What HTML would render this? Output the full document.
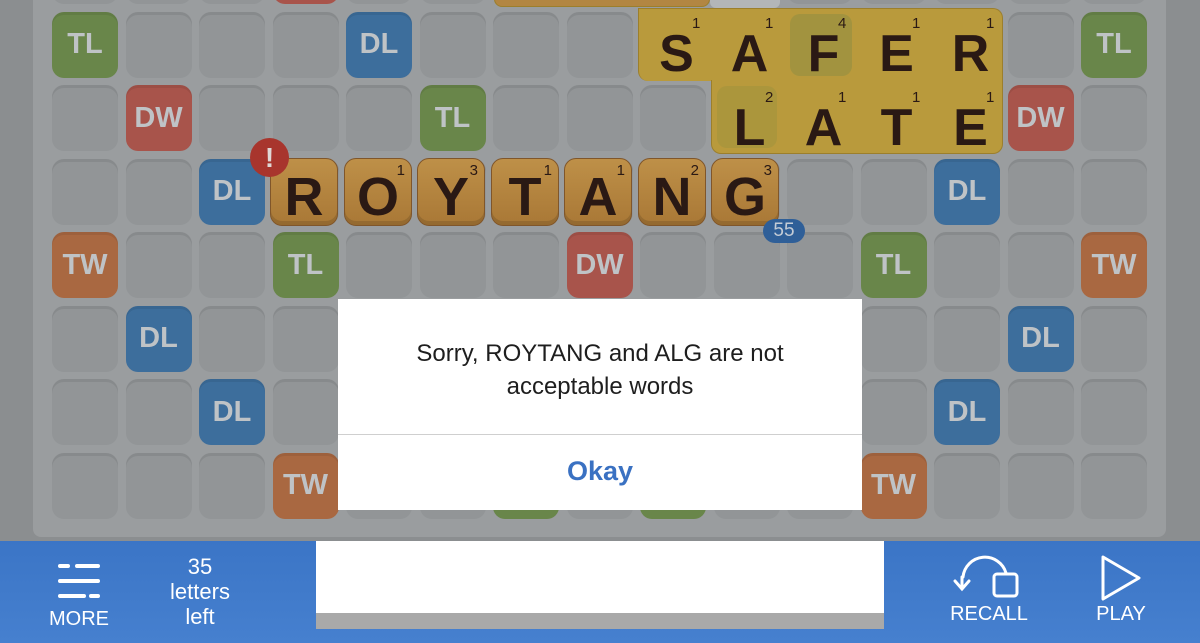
<!DOCTYPE html>
<html><head><meta charset="utf-8"><style>
*{margin:0;padding:0;box-sizing:border-box}
body{width:1200px;height:643px;overflow:hidden;background:#8b8e90;position:relative;font-family:"Liberation Sans",sans-serif}
.board{position:absolute;left:33px;top:-20px;width:1133px;height:557px;background:#9a9d9f;border-radius:0 0 8px 8px}
.grid{position:absolute;left:52px;top:-62px;display:grid;grid-template-columns:repeat(15,66px);grid-auto-rows:66px;column-gap:7.5px;row-gap:7.5px}
.grid div{border-radius:12px;background:#929597;box-shadow:inset 0 3px 0 rgba(0,0,0,.07);color:#bfc3c6;font-size:29px;font-weight:bold;display:flex;align-items:center;justify-content:center}
.grid .tl{background:#69864a}.grid .dl{background:#3d6e9c}.grid .dw{background:#a8544b}.grid .tw{background:#a96841}
.gold{position:absolute;background:#b99a3c;border:1px solid #9c7f2c}
.t{position:absolute;width:68px;height:68px;border-radius:12px;background:linear-gradient(#be9048,#a97836);border:1px solid #80562a;box-shadow:inset 0 -4px 0 rgba(0,0,0,.12);color:#2a1914;font-weight:bold;font-size:54px;text-align:center;line-height:76px}
.L{position:absolute;width:73px;text-align:center;color:#2a1914;font-weight:bold;font-size:52px}
.n{position:absolute;font-size:15px;color:#2a1914;font-weight:normal;line-height:1}
.t .n{right:6px;top:4px}
.bar{position:absolute;left:0;top:541px;width:1200px;height:102px;background:linear-gradient(#3b75c6,#4680cf);color:#fff}
.dlg{position:absolute;left:338px;top:299px;width:524px;height:211px;background:#fff}
</style></head><body>
<div class="board"></div>
<div class="grid">
<div></div><div></div><div></div><div class="dw"></div><div></div><div></div><div></div><div></div><div></div><div></div><div></div><div></div><div></div><div></div><div></div>
<div class="tl">TL</div><div></div><div></div><div></div><div class="dl">DL</div><div></div><div></div><div></div><div></div><div></div><div></div><div></div><div></div><div></div><div class="tl">TL</div>
<div></div><div class="dw">DW</div><div></div><div></div><div></div><div class="tl">TL</div><div></div><div></div><div></div><div></div><div></div><div></div><div></div><div class="dw">DW</div><div></div>
<div></div><div></div><div class="dl">DL</div><div></div><div></div><div></div><div></div><div></div><div></div><div></div><div></div><div></div><div class="dl">DL</div><div></div><div></div>
<div class="tw">TW</div><div></div><div></div><div class="tl">TL</div><div></div><div></div><div></div><div class="dw">DW</div><div></div><div></div><div></div><div class="tl">TL</div><div></div><div></div><div class="tw">TW</div>
<div></div><div class="dl">DL</div><div></div><div></div><div></div><div></div><div></div><div></div><div></div><div></div><div></div><div></div><div></div><div class="dl">DL</div><div></div>
<div></div><div></div><div class="dl">DL</div><div></div><div></div><div></div><div></div><div></div><div></div><div></div><div></div><div></div><div class="dl">DL</div><div></div><div></div>
<div></div><div></div><div></div><div class="tw">TW</div><div></div><div></div><div class="tl">TL</div><div></div><div class="tl">TL</div><div></div><div></div><div class="tw">TW</div><div></div><div></div><div></div>
</div>
<div class="gold" style="left:494px;top:-10px;width:216px;height:17px;border-radius:0 0 8px 8px;background:#b28642"></div>
<div style="position:absolute;left:710px;top:-5px;width:70px;height:13px;background:#b3b6b8;border-radius:0 0 6px 6px"></div>
<div class="gold" style="left:638px;top:8px;width:365px;height:73px;border-radius:0 10px 0 10px;border-bottom:none"></div>
<div class="gold" style="left:711px;top:80px;width:292px;height:74px;border-radius:0 0 10px 10px;border-top:none"></div>
<div style="position:absolute;left:790px;top:14px;width:62px;height:62px;border-radius:10px;background:#a2933f"></div>
<div style="position:absolute;left:717px;top:86px;width:60px;height:62px;border-radius:10px;background:#ab963c"></div>
<div class="L" style="left:640px;top:24px">S</div><div class="n" style="left:692px;top:16px">1</div>
<div class="L" style="left:713px;top:24px">A</div><div class="n" style="left:765px;top:16px">1</div>
<div class="L" style="left:787px;top:24px">F</div><div class="n" style="left:838px;top:16px">4</div>
<div class="L" style="left:860px;top:24px">E</div><div class="n" style="left:912px;top:16px">1</div>
<div class="L" style="left:934px;top:24px">R</div><div class="n" style="left:986px;top:16px">1</div>
<div class="L" style="left:713px;top:98px">L</div><div class="n" style="left:765px;top:90px">2</div>
<div class="L" style="left:787px;top:98px">A</div><div class="n" style="left:838px;top:90px">1</div>
<div class="L" style="left:860px;top:98px">T</div><div class="n" style="left:912px;top:90px">1</div>
<div class="L" style="left:934px;top:98px">E</div><div class="n" style="left:986px;top:90px">1</div>
<div class="t" style="left:270px;top:158px">R</div>
<div class="t" style="left:344px;top:158px">O<span class="n">1</span></div>
<div class="t" style="left:417px;top:158px">Y<span class="n">3</span></div>
<div class="t" style="left:491px;top:158px">T<span class="n">1</span></div>
<div class="t" style="left:564px;top:158px">A<span class="n">1</span></div>
<div class="t" style="left:638px;top:158px">N<span class="n">2</span></div>
<div class="t" style="left:711px;top:158px">G<span class="n">3</span></div>
<div style="position:absolute;left:250px;top:138px;width:39px;height:39px;border-radius:50%;background:#a8352d;color:#e0d8d6;font-weight:bold;font-size:28px;text-align:center;line-height:39px">!</div>
<div style="position:absolute;left:763px;top:219px;width:42px;height:24px;border-radius:12px;background:#2f5f98;color:#c4ccd6;font-size:19px;text-align:center;line-height:24px">55</div>
<div class="dlg">
<div style="position:absolute;top:38px;width:100%;text-align:center;font-size:24px;line-height:33px;color:#1e1e1e">Sorry, ROYTANG and ALG are not<br>acceptable words</div>
<div style="position:absolute;top:135px;width:100%;height:1px;background:#cfcfcf"></div>
<div style="position:absolute;top:157px;width:100%;text-align:center;font-size:27px;font-weight:bold;color:#3a71c2">Okay</div>
</div>
<div class="bar">
<div style="position:absolute;left:316px;top:0;width:568px;height:72px;background:#fff"></div>
<div style="position:absolute;left:316px;top:72px;width:568px;height:16px;background:#a9a9a9"></div>
<svg style="position:absolute;left:0;top:0" width="1200" height="102" fill="none" stroke="#fff" stroke-linecap="round">
<g stroke-width="4"><path d="M60 25H68M77 25H98M60 40H98M60 55H84M91 55H98"/></g>
<g stroke-width="3"><path d="M963 36A22 22 0 0 1 1006 32"/><path d="M955 40L962 48L969 40"/><path d="M962 47V36"/><rect x="994" y="33" width="23" height="22" rx="3"/><path d="M1103 16L1139 37L1103 58Z" stroke-linejoin="round"/></g>
</svg>
<div style="position:absolute;left:40px;top:67px;width:78px;text-align:center;font-size:20px">MORE</div>
<div style="position:absolute;left:150px;top:13px;width:100px;text-align:center;font-size:22px;line-height:25px">35<br>letters<br>left</div>
<div style="position:absolute;left:940px;top:62px;width:98px;text-align:center;font-size:20px">RECALL</div>
<div style="position:absolute;left:1080px;top:62px;width:82px;text-align:center;font-size:20px">PLAY</div>
</div>
</body></html>
